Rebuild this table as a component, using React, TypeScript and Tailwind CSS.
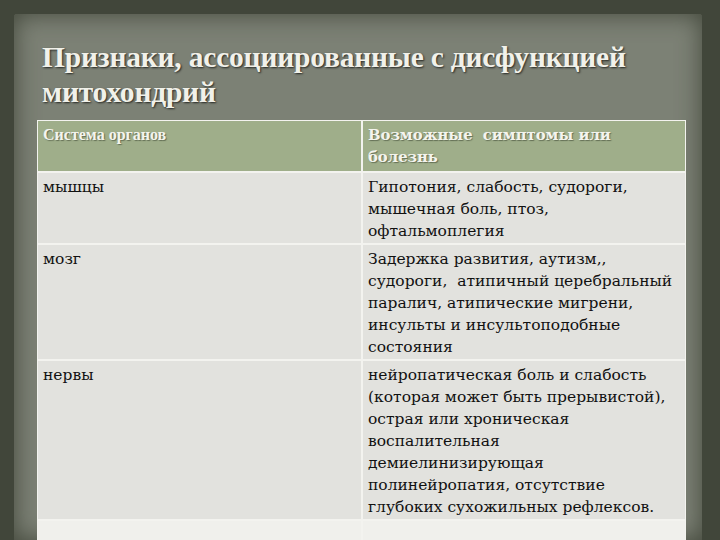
import React from 'react';

const rows: { organ: string; lines: string[] }[] = [
  { organ: 'мышцы', lines: ['Гипотония, слабость, судороги,', 'мышечная боль, птоз,', 'офтальмоплегия'] },
  {
    organ: 'мозг',
    lines: [
      'Задержка развития, аутизм,,',
      'судороги,  атипичный церебральный',
      'паралич, атипические мигрени,',
      'инсульты и инсультоподобные',
      'состояния',
    ],
  },
  {
    organ: 'нервы',
    lines: [
      'нейропатическая боль и слабость',
      '(которая может быть прерывистой),',
      'острая или хроническая',
      'воспалительная',
      'демиелинизирующая',
      'полинейропатия, отсутствие',
      'глубоких сухожильных рефлексов.',
    ],
  },
];

export default function App() {
  return (
    <div className="w-[720px] h-[540px] overflow-hidden bg-[#41463a] pt-[14px] pl-[14px] pr-[18px] font-['Liberation_Serif',serif]">
      <div className="h-full bg-[#7c8175] shadow-[inset_0_0_24px_rgba(45,50,38,0.75)] pl-[23px] pr-[14px] pt-[26px] rounded-t-[3px]">
        <h1 className="pl-[5px] text-[29.5px] leading-[35px] font-bold text-[#f1f1ea] [text-shadow:1px_1px_2px_rgba(0,0,0,0.7)] tracking-[-0.2px]">
          Признаки, ассоциированные с дисфункцией
          <br />
          митохондрий
        </h1>
        <div className="mt-[10px] w-[649px] bg-[#f3f3ef] p-[1px] flex flex-col gap-[2px]">
          <div className="grid grid-cols-[323px_1fr] gap-[2px] leading-[22px] font-bold text-[#f4f4ee] [text-shadow:1px_1px_1px_rgba(60,70,50,0.6)]">
            <div className="bg-[#9fae8a] h-[50px] px-[5px] pt-[3px] text-[16px]">Система органов</div>
            <div className="bg-[#9fae8a] h-[50px] px-[5px] pt-[3px] text-[14.8px] font-['DejaVu_Serif',serif]">
              Возможные&nbsp; симптомы или
              <br />
              болезнь
            </div>
          </div>
          {rows.map((r) => (
            <div key={r.organ} className="grid grid-cols-[323px_1fr] gap-[2px] font-['DejaVu_Serif',serif] text-[15.5px] leading-[22px] text-[#111]">
              <div className="bg-[#e2e2de] px-[5px] pt-[3px] pb-[1px]">{r.organ}</div>
              <div className="bg-[#e2e2de] px-[5px] pt-[3px] pb-[1px]">
                {r.lines.map((l, i) => (
                  <div key={i} className="whitespace-pre">{l}</div>
                ))}
              </div>
            </div>
          ))}
          <div className="grid grid-cols-[323px_1fr] gap-[2px]">
            <div className="bg-[#f0f0ec] h-[40px]" />
            <div className="bg-[#f0f0ec] h-[40px]" />
          </div>
        </div>
      </div>
    </div>
  );
}
